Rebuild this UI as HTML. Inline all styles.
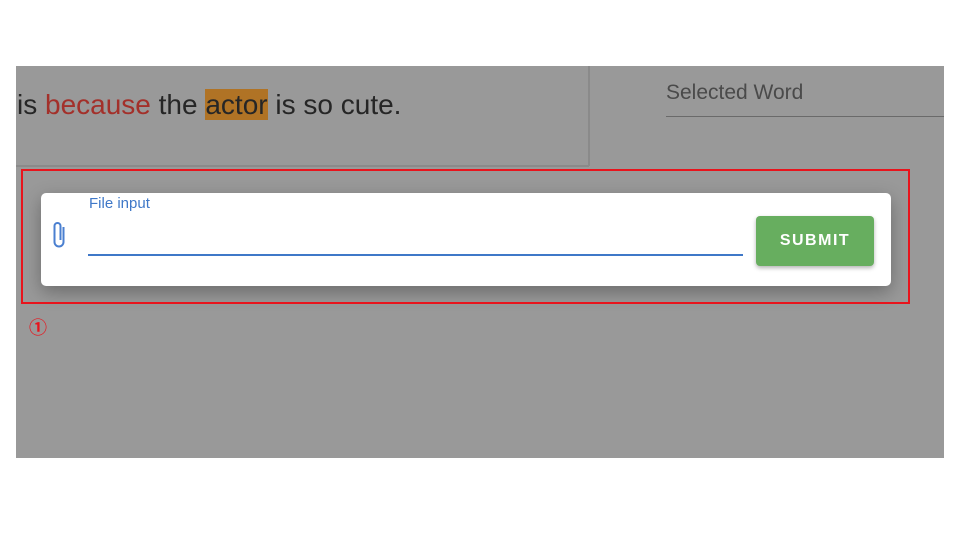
<!DOCTYPE html>
<html><head><style>
body{margin:0;width:960px;height:540px;background:#fff;position:relative;overflow:hidden;font-family:"Liberation Sans",Arial,sans-serif}
.g{position:absolute;left:16px;top:66px;width:928px;height:392px;background:#999}
.a{position:absolute}
</style></head><body>
<div class="g"></div>
<div class="a" style="left:16px;top:165px;width:573px;height:2px;background:#8a8a8a"></div>
<div class="a" style="left:588px;top:66px;width:2px;height:100px;background:#8a8a8a"></div>
<div class="a" style="left:17px;top:89px;font-size:28px;color:#262626;white-space:nowrap;line-height:32px">is <span style="color:#a3302a">because</span> the <span style="background:#b07325;color:#262626">actor</span> is so cute.</div>
<div class="a" style="left:666px;top:81px;font-size:21px;color:#4a4a4a">Selected Word</div>
<div class="a" style="left:666px;top:116px;width:278px;height:1px;background:#6a6a6a"></div>
<div class="a" style="left:41px;top:193px;width:850px;height:93px;background:#fff;border-radius:5px;box-shadow:0 6px 18px rgba(0,0,0,.3)"></div>
<div class="a" style="left:21px;top:169px;width:885px;height:131px;border:2px solid #e8141c;z-index:5"></div>
<svg class="a" style="left:50px;top:218px" width="18" height="34" viewBox="0 0 18 34"><path d="M13.5 9 V24 a4.5 4.5 0 0 1 -9 0 V8 a3 3 0 0 1 6 0 V22" fill="none" stroke="#4a7fd0" stroke-width="2"/></svg>
<div class="a" style="left:89px;top:195px;font-size:15px;color:#3f78c8">File input</div>
<div class="a" style="left:88px;top:254px;width:655px;height:2px;background:#3f78c8"></div>
<div class="a" style="left:756px;top:216px;width:118px;height:50px;background:#67ae5f;border-radius:4px;box-shadow:0 2px 4px rgba(0,0,0,.3);color:#fff;font-size:16px;font-weight:bold;letter-spacing:1.5px;text-align:center;line-height:50px">SUBMIT</div>
<div class="a" style="left:29px;top:314px;font-size:18px;font-weight:bold;color:#e8141c;font-family:'Liberation Sans','Noto Sans CJK JP',sans-serif">①</div>
</body></html>
